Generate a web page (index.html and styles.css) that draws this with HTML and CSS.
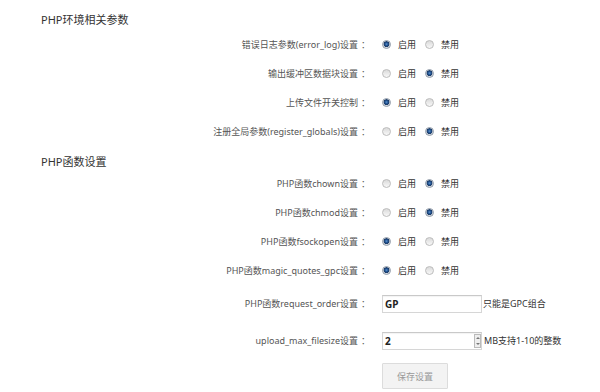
FILE: index.html
```html
<!DOCTYPE html>
<html lang="zh-CN">
<head>
<meta charset="utf-8">
<link rel="stylesheet" href="styles.css">
</head>
<body>
<div class="page">
  <h2 class="sec-title">PHP环境相关参数</h2>
  <div class="form">
    <div class="row"><div class="lbl">错误日志参数(error_log)设置<span class="colon">：</span></div><div class="ctl"><span class="radio on"></span><span class="opt">启用</span><span class="radio"></span><span class="opt">禁用</span></div></div>
    <div class="row"><div class="lbl">输出缓冲区数据块设置<span class="colon">：</span></div><div class="ctl"><span class="radio"></span><span class="opt">启用</span><span class="radio on"></span><span class="opt">禁用</span></div></div>
    <div class="row"><div class="lbl">上传文件开关控制<span class="colon">：</span></div><div class="ctl"><span class="radio on"></span><span class="opt">启用</span><span class="radio"></span><span class="opt">禁用</span></div></div>
    <div class="row"><div class="lbl">注册全局参数(register_globals)设置<span class="colon">：</span></div><div class="ctl"><span class="radio"></span><span class="opt">启用</span><span class="radio on"></span><span class="opt">禁用</span></div></div>
  </div>
  <h2 class="sec-title sec2">PHP函数设置</h2>
  <div class="form">
    <div class="row"><div class="lbl">PHP函数chown设置<span class="colon">：</span></div><div class="ctl"><span class="radio"></span><span class="opt">启用</span><span class="radio on"></span><span class="opt">禁用</span></div></div>
    <div class="row"><div class="lbl">PHP函数chmod设置<span class="colon">：</span></div><div class="ctl"><span class="radio"></span><span class="opt">启用</span><span class="radio on"></span><span class="opt">禁用</span></div></div>
    <div class="row"><div class="lbl">PHP函数fsockopen设置<span class="colon">：</span></div><div class="ctl"><span class="radio on"></span><span class="opt">启用</span><span class="radio"></span><span class="opt">禁用</span></div></div>
    <div class="row"><div class="lbl">PHP函数magic_quotes_gpc设置<span class="colon">：</span></div><div class="ctl"><span class="radio on"></span><span class="opt">启用</span><span class="radio"></span><span class="opt">禁用</span></div></div>
    <div class="row tall"><div class="lbl">PHP函数request_order设置<span class="colon">：</span></div><div class="ctl"><div class="field"><span class="val">GP</span></div><span class="hint">只能是GPC组合</span></div></div>
    <div class="row tall"><div class="lbl">upload_max_filesize设置<span class="colon">：</span></div><div class="ctl"><div class="field"><span class="val">2</span><span class="spin"><span class="up"></span><span class="dn"></span></span></div><span class="hint hint2">MB支持1-10的整数</span></div></div>
    <div class="row btnrow"><div class="lbl"></div><div class="ctl"><button class="save">保存设置</button></div></div>
  </div>
</div>
</body>
</html>
```

FILE: styles.css
```css
* { box-sizing: border-box; }
html, body { margin: 0; padding: 0; background: #fff; }
body {
  font-family: "Noto Sans", "Noto Sans CJK SC", sans-serif;
  color: #333;
  width: 600px;
  height: 392px;
  overflow: hidden;
}
.page { padding: 10px 0 0 0; }
.sec-title {
  margin: 0;
  padding-left: 41px;
  font-size: 11px;
  font-weight: normal;
  line-height: 20px;
  height: 20px;
  color: #333;
}
.sec2 { height: 14px; line-height: 14px; margin-top: 9px; }
.form { display: flex; flex-direction: column; }
.row {
  display: grid;
  grid-template-columns: 370px 1fr;
  column-gap: 12px;
  align-items: center;
  height: 29px;
}
.row.tall { height: 37px; }
.btnrow { height: 28px; margin-top: 4px; align-items: start; }
.lbl {
  text-align: right;
  font-size: 9px;
  color: #555;
  white-space: nowrap;
}
.colon { margin-left: 3px; }
.ctl { display: flex; align-items: center; }
.radio {
  width: 9px;
  height: 9px;
  border-radius: 50%;
  border: 1px solid #bcbcbc;
  background: linear-gradient(#dadada, #f8f8f8);
  display: inline-block;
  flex: none;
}
.radio.on {
  border-color: #8f9aa8;
  background: radial-gradient(circle at 50% 45%, #5a92cf 0, #1f4f8c 1.6px, #1c3c68 2.6px, #d5d9df 3.2px, #eef0f3 100%);
}
.opt {
  font-size: 9px;
  color: #333;
  margin-left: 7px;
  margin-right: 9px;
}
.field {
  width: 100px;
  height: 18px;
  border: 1px solid #d6d6d6;
  border-top-color: #c9c9c9;
  box-shadow: inset 0 1px 1px rgba(0,0,0,0.05);
  display: flex;
  align-items: center;
  background: #fff;
}
.val {
  flex: 1;
  padding-left: 2px;
  font-size: 10px;
  font-weight: bold;
  color: #222;
}
.spin {
  width: 7px;
  height: 14px;
  display: flex;
  flex-direction: column;
  border: 1px solid #bbb;
  background: #eee;
}
.spin .up, .spin .dn { flex: 1; display: flex; justify-content: center; align-items: center; }
.spin .up::after { content: ""; border: 2px solid transparent; border-bottom: 2px solid #777; border-top: 0; }
.spin .dn::after { content: ""; border: 2px solid transparent; border-top: 2px solid #777; border-bottom: 0; }
.hint { font-size: 9px; color: #333; margin-left: 1px; }
.hint2 { margin-left: 2px; }
.save {
  width: 66px;
  height: 26px;
  border: 1px solid #dcdcdc;
  background: #f3f3f3;
  color: #999;
  font-family: "Noto Sans", "Noto Sans CJK SC", sans-serif;
  font-size: 9px;
  padding: 0;
  border-radius: 1px;
}
```
